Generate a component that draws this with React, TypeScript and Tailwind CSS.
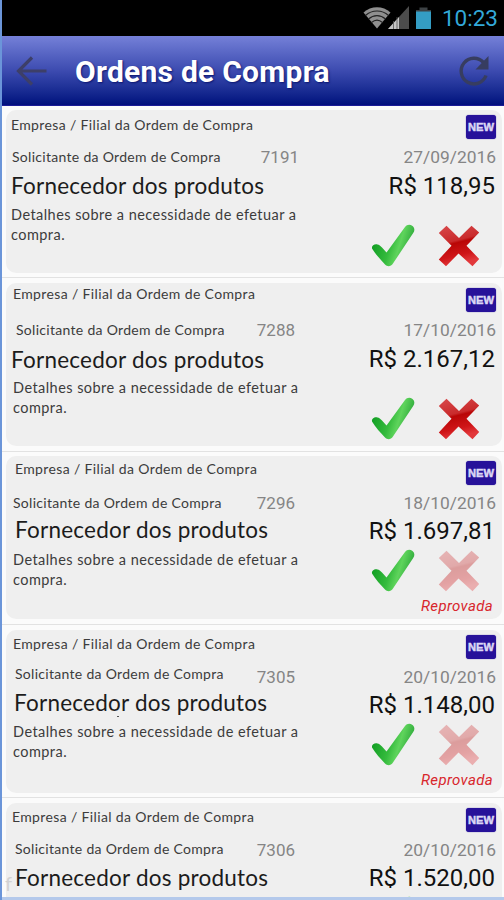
type Order = {
  id: string;
  date: string;
  price: string;
  rejected?: boolean;
  status?: string;
  description?: [string, string];
  row: string;
  company: string;
  requester: string;
  number: string;
  supplier: string;
  details: string;
};

const need: [string, string] = ["Detalhes sobre a necessidade de efetuar a", "compra."];

const orders: Order[] = [
  {
    id: "7191", date: "27/09/2016", price: "R$ 118,95", description: need,
    row: "h-[172px] pt-1", company: "mt-[5px] ml-[5px]", requester: "mt-[12px] pl-[6px]",
    number: "mr-0", supplier: "mt-[5px] ml-[5px]", details: "mt-[5px] ml-[5px]",
  },
  {
    id: "7288", date: "17/10/2016", price: "R$ 2.167,12", description: need,
    row: "h-[174px] pt-[5px]", company: "mt-[1px] ml-[7px]", requester: "mt-[16px] pl-[10px]",
    number: "mr-[4px]", supplier: "mt-[6px] ml-[5px]", details: "mt-[4px] ml-[7px]",
  },
  {
    id: "7296", date: "18/10/2016", price: "R$ 1.697,81", rejected: true, status: "Reprovada", description: need,
    row: "h-[173px] pt-1", company: "mt-[3px] ml-[9px]", requester: "mt-[14px] pl-[7px]",
    number: "mr-[4px]", supplier: "mt-[3px] ml-[9px]", details: "mt-[6px] ml-[7px]",
  },
  {
    id: "7305", date: "20/10/2016", price: "R$ 1.148,00", rejected: true, status: "Reprovada", description: need,
    row: "h-[173px] pt-[5px]", company: "mt-[4px] ml-[7px]", requester: "mt-[10px] pl-[9px]",
    number: "mr-[4px] mt-[3px]", supplier: "mt-[5px] ml-[8px]", details: "mt-[5px] ml-[7px]",
  },
  {
    id: "7306", date: "20/10/2016", price: "R$ 1.520,00", rejected: true,
    row: "h-[173px] pt-[5px]", company: "mt-[4px] ml-[6px]", requester: "mt-[12px] pl-[9px]",
    number: "mr-[4px] mt-[1px]", supplier: "mt-[5px] ml-[9px]", details: "",
  },
];

function CheckIcon() {
  return (
    <svg width="44" height="44" viewBox="0 0 44 44" className="block">
      <defs>
        <linearGradient id="green" x1="0" y1="0.3" x2="1" y2="0.6">
          <stop offset="0" stopColor="#0d9a20" />
          <stop offset="0.45" stopColor="#35bb3d" />
          <stop offset="0.65" stopColor="#5fd45c" />
          <stop offset="1" stopColor="#1f9c30" />
        </linearGradient>
      </defs>
      <path
        d="M1 24.500C0.500 21.500 3.500 19.800 6.500 20.500C9.500 21 12.500 25.500 15.500 28.500L34 3C36 0.300 39 0 41.500 2C43.800 4 43.900 6.500 42.200 9L22 39.500C19.800 42.800 16.500 43 14 40.500C9.500 35.500 4.500 30.500 1 24.500Z"
        fill="url(#green)"
      />
    </svg>
  );
}

function CrossIcon({ faded }: { faded?: boolean }) {
  return (
    <svg width="42" height="42" viewBox="0 0 42 42" className={faded ? "block opacity-35" : "block"}>
      <defs>
        <linearGradient id="red" x1="0" y1="0" x2="0.25" y2="1">
          <stop offset="0" stopColor="#d94a4c" />
          <stop offset="0.44" stopColor="#c92b2c" />
          <stop offset="0.5" stopColor="#b90606" />
          <stop offset="0.8" stopColor="#cf1518" />
          <stop offset="1" stopColor="#e2383b" />
        </linearGradient>
      </defs>
      <path
        d="M8.500 0.800L21 13L33.500 0.800L41.200 7.500L28.500 20.700L41.200 34L34.500 41.200L20.500 28.500L8 41.200L0.800 34.500L13.500 20.700L0.800 8Z"
        fill="url(#red)"
      />
    </svg>
  );
}

function NewBadge() {
  return (
    <div className="h-6 w-[30px] rounded-[3px] bg-[#27129a] shadow-[0_0_1px_#27129a]">
      <svg width="30" height="24" viewBox="0 0 30 24" className="block">
        <text x="2" y="16" textLength="26" lengthAdjust="spacingAndGlyphs" fontFamily="Liberation Sans" fontWeight="700" fontSize="11.500" fill="#dcd8f5" stroke="#dcd8f5" strokeWidth="0.500">NEW</text>
      </svg>
    </div>
  );
}

function OrderRow({ order }: { order: Order }) {
  return (
    <li className={`${order.row} shrink-0 border-b border-[#e2e2e2] pl-1 pr-[2px]`}>
      <article className="flex h-[163px] rounded-[10px] bg-[#efefef]">
        <div className="w-[293px] shrink-0 whitespace-nowrap font-[Lato,sans-serif] text-[14px] leading-[20px] text-[#3c3c3c]">
          <p className={`${order.company} tracking-[0.36px]`}>Empresa / Filial da Ordem de Compra</p>
          <div className={`${order.requester} flex h-5 items-start justify-between`}>
            <span className="tracking-[0.3px]">Solicitante da Ordem de Compra</span>
            <span className={`${order.number} font-[Roboto,sans-serif] text-[17px] text-[#858585]`}>{order.id}</span>
          </div>
          <h2 className={`${order.supplier} text-[22.5px] leading-[28px] tracking-[0.23px] text-[#1c1c1c]`}>Fornecedor dos produtos</h2>
          {order.description && (
            <p className={`${order.details} text-[14.5px] tracking-[0.45px]`}>
              {order.description[0]}<br />{order.description[1]}
            </p>
          )}
        </div>
        <div className="flex flex-1 flex-col items-end pr-[6px] pt-[5px] font-[Roboto,sans-serif]">
          <NewBadge />
          <time className="mt-2 text-[17.400px] leading-[20px] text-[#858585]">{order.date}</time>
          <strong className={`${order.rejected ? "mb-px mt-1" : "mt-[5px]"} mr-px whitespace-nowrap text-[24px] font-normal leading-[28px] text-[#111]`}>{order.price}</strong>
          <div className={`${order.rejected ? "mt-[3px]" : "mt-6"} mr-[16px] flex items-start gap-[23px]`}>
            <CheckIcon />
            <div className="mt-[1px]"><CrossIcon faded={order.rejected} /></div>
          </div>
          {order.status && (
            <em className="mr-[3px] mt-[4px] text-[15px] leading-[18px] tracking-[0.35px] text-[#d8262c]">{order.status}</em>
          )}
        </div>
      </article>
    </li>
  );
}

function StatusBar() {
  return (
    <div className="flex h-9 shrink-0 items-start justify-end bg-black pr-[6px] pt-[6px]">
      <svg width="46" height="24" viewBox="0 0 46 24">
        <path d="M0.500 6.500C8 -0.500 20 -0.500 27.500 6.500L14 22.500Z" fill="#8f8f8f" />
        <path d="M2.500 9.500C9 3.500 19 3.500 25.500 9.500M5.500 13C10.500 8.500 17.500 8.500 22.500 13M8.500 16.500C12 13.500 16 13.500 19.500 16.500" fill="none" stroke="#222" strokeWidth="1.100" />
        <path d="M46 0V23H25Z" fill="#4c4c4c" />
        <path d="M36 11V23H25Z" fill="#c4c4c4" />
        <path d="M30.500 15V23M34 11V23" stroke="#555" strokeWidth="0.800" />
      </svg>
      <svg className="ml-[6px]" width="17" height="24" viewBox="0 0 17 24">
        <path d="M4.500 1.500H12.500V4H16V6H1V4H4.500Z" fill="#3d4245" />
        <path d="M1 5.500H16V23H1Z" fill="#349dc4" />
      </svg>
      <span className="ml-[10px] font-[Roboto,sans-serif] text-[22.500px] leading-[25px] text-[#33a9d9]">10:23</span>
    </div>
  );
}

export default function App() {
  return (
    <div className="relative flex h-[900px] w-[504px] flex-col overflow-hidden border-l-2 border-[#6b95d9] bg-[#fbfbfb]">
      <StatusBar />
      <header className="flex h-[70px] shrink-0 items-center border-b border-[#1c1c98] bg-linear-to-b from-[#7580d8] via-[#3d4bb0] to-[#020f7d] px-[14px]">
        <svg width="32" height="30" viewBox="0 0 32 30" fill="none" stroke="#3d3f68" strokeWidth="3.200">
          <path d="M3 15H30.500M16 1.500L2.500 15L16 28.500" />
        </svg>
        <h1 className="ml-[27px] mt-[2px] font-[Roboto,sans-serif] text-[30px] font-bold leading-9 tracking-[0.25px] text-white [text-shadow:1px_1px_2px_#0a1670]">Ordens de Compra</h1>
        <svg className="ml-auto" width="32" height="32" viewBox="0 0 32 32">
          <path d="M25.500 7.500A12.800 12.800 0 1 0 28 20.500" fill="none" stroke="#373d60" strokeWidth="3.400" />
          <path d="M30.500 1V14.500H17.500Z" fill="#373d60" />
        </svg>
      </header>
      <ul className="flex flex-col">
        {orders.map((order) => <OrderRow key={order.id} order={order} />)}
      </ul>
      <span className="absolute left-[115px] top-[716px] h-px w-[2px] bg-[#555]" />
      <span className="absolute left-[3px] top-[873px] font-[Lato,sans-serif] text-[20px] leading-5 text-[#d2d2d2]">f</span>
      <div className="absolute -left-0.5 bottom-0 h-[3px] w-[504px] bg-[#b4c9eb]" />
      <div className="absolute -left-0.5 top-0 h-[106px] w-0.5 bg-[#2380d3]" />
    </div>
  );
}
